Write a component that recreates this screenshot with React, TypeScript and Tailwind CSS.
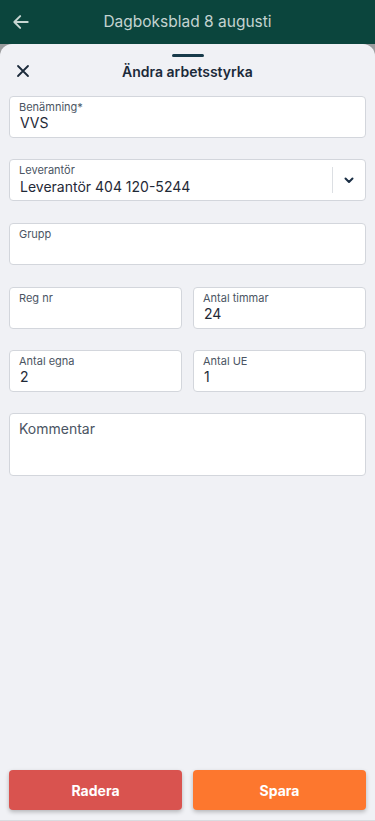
import React from "react";

const font = { fontFamily: "Inter, 'Noto Sans', sans-serif" };

function Field({ label, value, className = "" }: { label: string; value?: string; className?: string }) {
    return (
        <div className={`h-[42px] rounded-[4px] border border-[#d3d6dc] bg-white px-[9px] pt-[3px] ${className}`}>
            <div className="text-[11px] leading-[14px] text-[#4b5563]">{label}</div>
            {value && <div className="pl-[1px] text-[14px] leading-[18px] text-[#1f2937]">{value}</div>}
        </div>
    );
}

export default function App() {
    return (
        <div className="flex h-[821px] w-[375px] flex-col bg-[#9a9c9e]" style={font}>
            {/* Header */}
            <div className="relative flex h-[44px] shrink-0 items-center justify-center bg-[#0b453d]">
                <svg className="absolute left-[11px] top-[12px]" width="20" height="20" viewBox="0 0 24 24" fill="none" stroke="#c7d6d2" strokeWidth="2.4" strokeLinecap="round" strokeLinejoin="round">
                    <path d="M20 12H5" />
                    <path d="M11 5l-7 7 7 7" />
                </svg>
                <span className="text-[15.5px] text-[#c3d3d0]">Dagboksblad 8 augusti</span>
            </div>

            {/* Sheet */}
            <div className="flex flex-1 flex-col rounded-t-[12px] bg-[#f0f1f5]">
                <div className="flex justify-center pt-[10px]">
                    <div className="h-[3px] w-[32px] rounded-full bg-[#173a4a]" />
                </div>
                <div className="relative flex h-[28px] items-center justify-center">
                    <svg className="absolute left-[16px] top-[7px]" width="14" height="14" viewBox="0 0 14 14" fill="none" stroke="#1b2a3a" strokeWidth="1.8" strokeLinecap="round">
                        <path d="M2 2l10 10M12 2L2 12" />
                    </svg>
                    <span className="text-[14px] font-semibold text-[#1b2a3a]">Ändra arbetsstyrka</span>
                </div>

                <div className="flex flex-col px-[9px] pt-[11px]">
                    <Field label="Benämning*" value="VVS" />

                    <div className="mt-[21px] flex h-[42px] rounded-[4px] border border-[#d3d6dc] bg-white">
                        <div className="flex-1 px-[9px] pt-[3px]">
                            <div className="text-[11px] leading-[14px] text-[#4b5563]">Leverantör</div>
                            <div className="pl-[1px] text-[14px] leading-[20px] text-[#1f2937]">Leverantör 404 120-5244</div>
                        </div>
                        <div className="my-[7px] w-px bg-[#dcdfe3]" />
                        <div className="flex w-[32px] items-center justify-center">
                            <svg width="12" height="12" viewBox="0 0 12 12" fill="none" stroke="#1b2f45" strokeWidth="2" strokeLinecap="round" strokeLinejoin="round">
                                <path d="M2.5 4.5L6 8l3.5-3.5" />
                            </svg>
                        </div>
                    </div>

                    <Field label="Grupp" className="mt-[22px]" />

                    <div className="mt-[22px] grid grid-cols-2 gap-[11px]">
                        <Field label="Reg nr" />
                        <Field label="Antal timmar" value="24" />
                    </div>

                    <div className="mt-[21px] grid grid-cols-2 gap-[11px]">
                        <Field label="Antal egna" value="2" />
                        <Field label="Antal UE" value="1" />
                    </div>

                    <div className="mt-[21px] h-[63px] rounded-[4px] border border-[#d3d6dc] bg-white px-[9px] pt-[2px]">
                        <span className="text-[14px] text-[#4b5563]">Kommentar</span>
                    </div>
                </div>

                <div className="mt-auto grid grid-cols-2 gap-[11px] px-[9px] pb-[10px]">
                    <button className="h-[40px] rounded-[4px] bg-[#d9534f] text-[14px] font-bold text-white shadow-[0_2px_4px_rgba(0,0,0,0.25)]">
                        Radera
                    </button>
                    <button className="h-[40px] rounded-[4px] bg-[#fd772e] text-[14px] font-bold text-white shadow-[0_2px_4px_rgba(0,0,0,0.25)]">
                        Spara
                    </button>
                </div>
                <div className="h-px bg-[#d9dbe0]" />
            </div>
        </div>
    );
}
